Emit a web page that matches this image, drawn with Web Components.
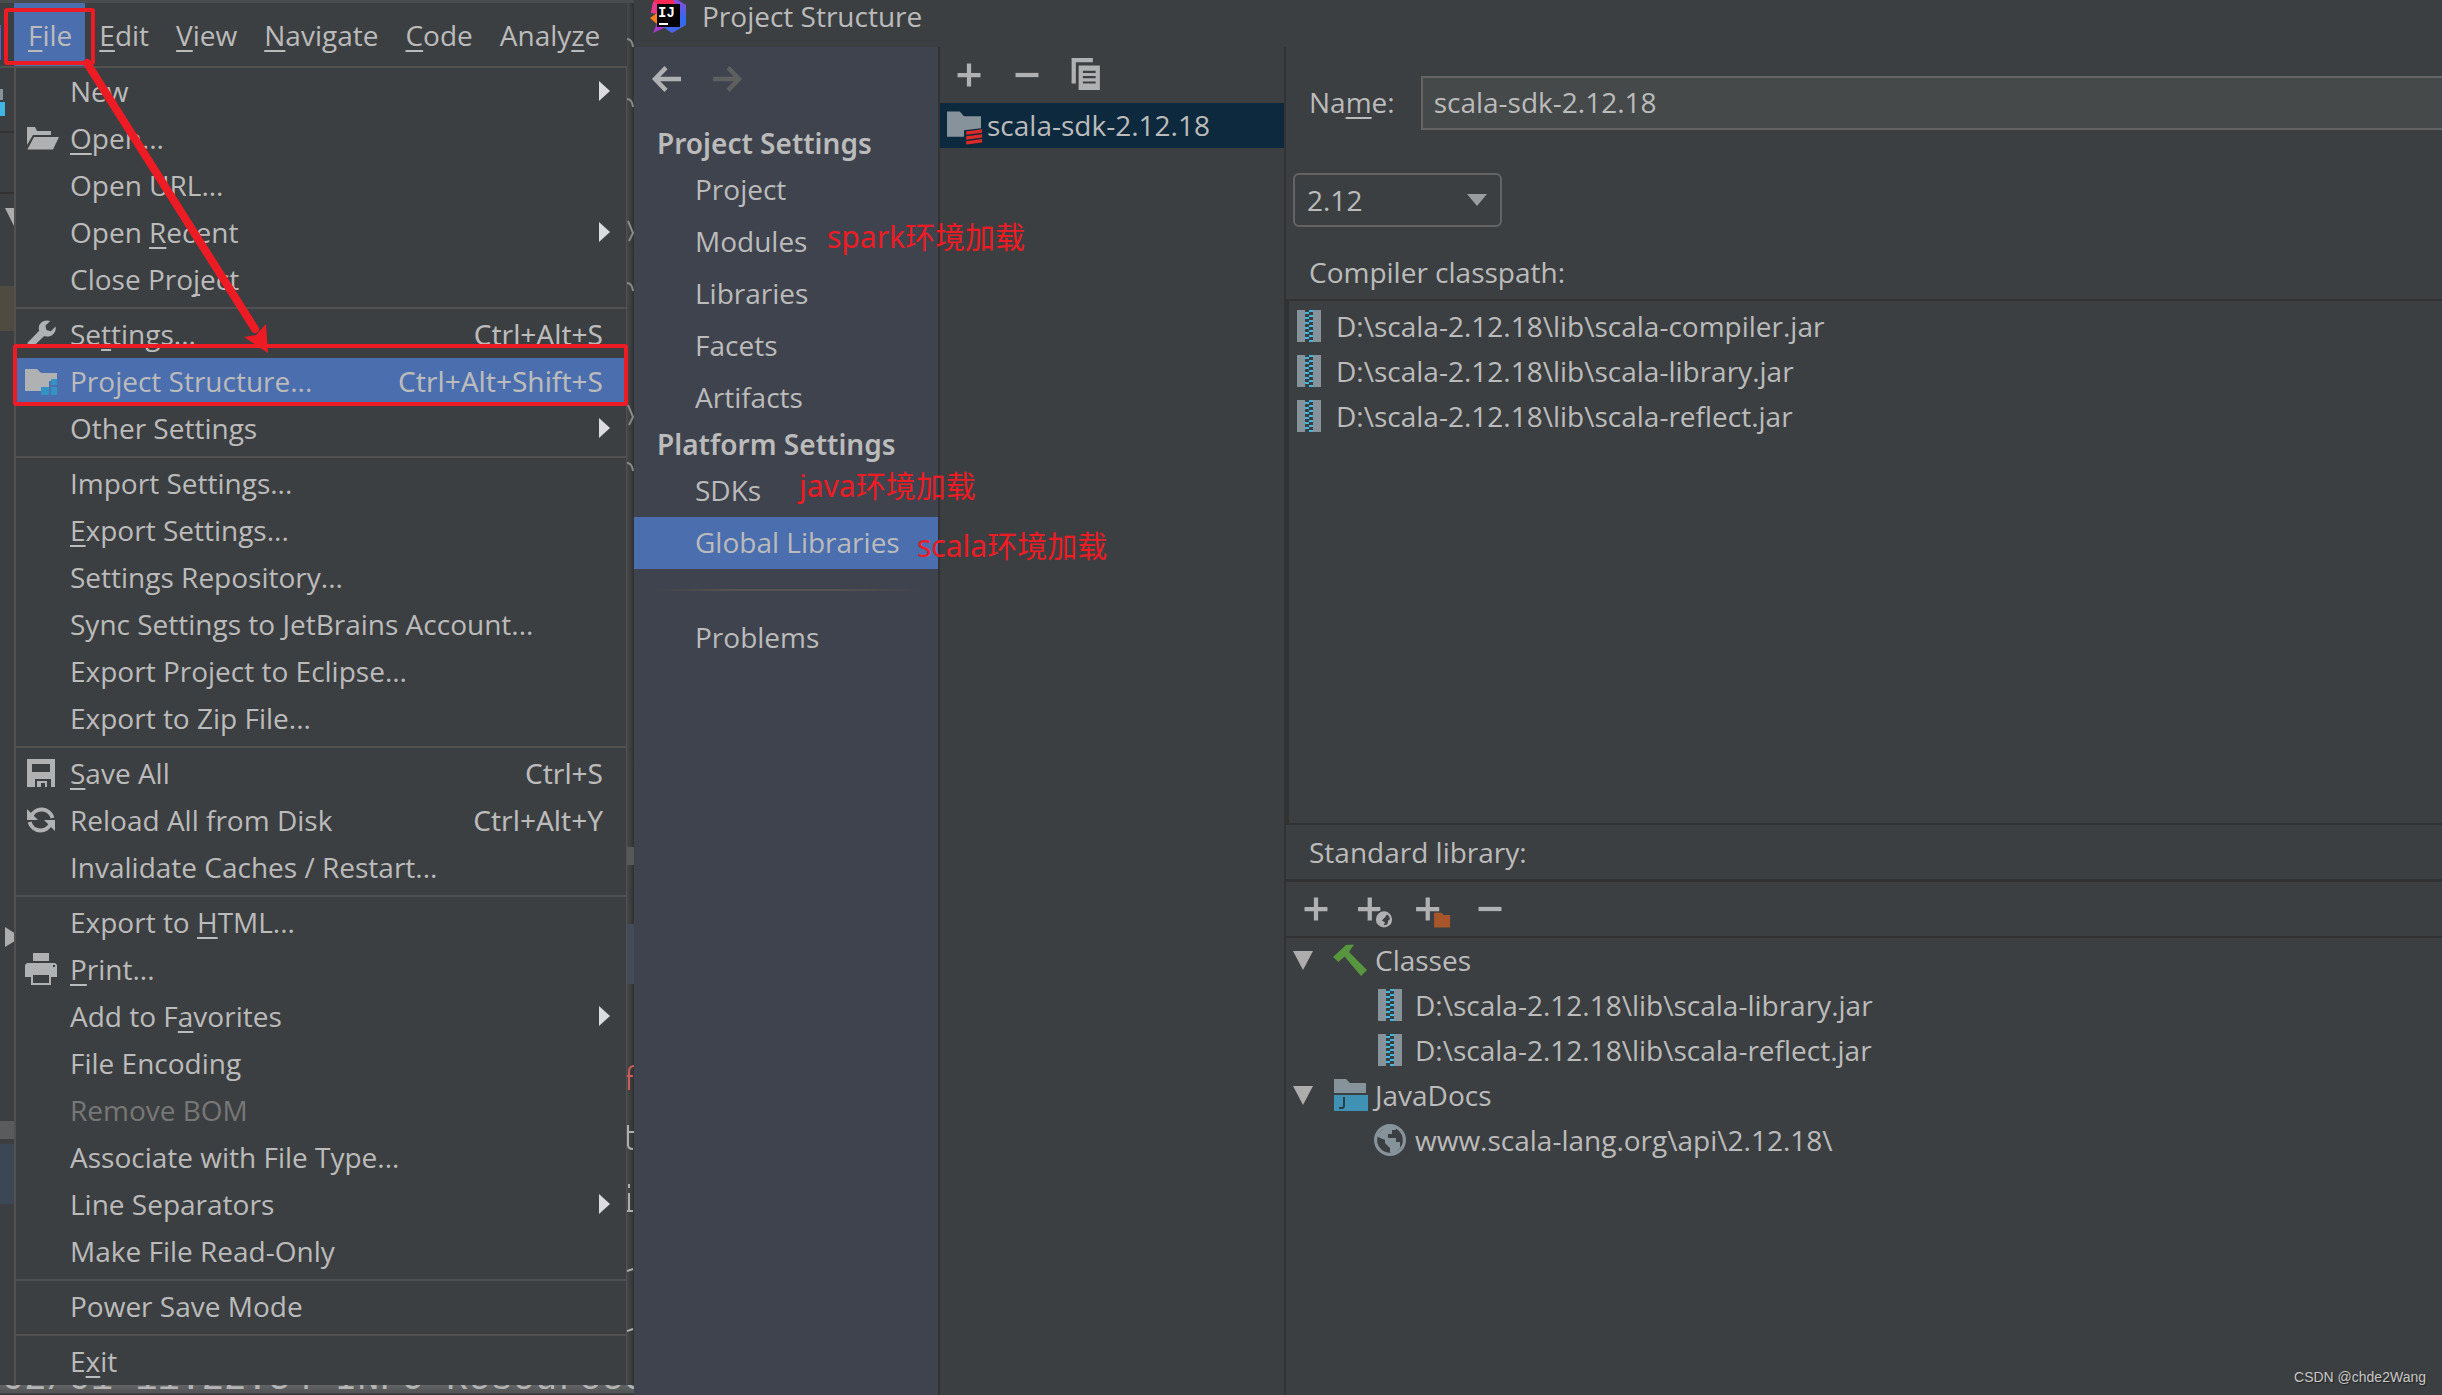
<!DOCTYPE html>
<html lang="en">
<head>
<meta charset="utf-8">
<title>Project Structure</title>
<style>
    html,
    body {
        margin: 0;
        height: 100%;
    }

    body {
        --panel: #3c3f41;
        --line: #323232;
        --menu-line: #515151;
        --text: #bbbbbb;
        --select: #4b6eaf;
        --mark: #ed1c24;
        background: var(--panel);
        color: var(--text);
        font: 28px/38px "Open Sans", "Noto Sans CJK SC", sans-serif;
        overflow: hidden;
    }

    u {
        text-decoration-thickness: 2px;
        text-underline-offset: 4px;
        text-decoration-skip-ink: none;
    }
</style>
</head>
<body>
<app-screen>
    <ide-window slot="ide">
        <menu-bar slot="bar">
            <button class="open"><u>F</u>ile</button>
            <button><u>E</u>dit</button>
            <button><u>V</u>iew</button>
            <button><u>N</u>avigate</button>
            <button><u>C</u>ode</button>
            <button>Analy<u>z</u>e</button>
        </menu-bar>
        <menu-entry submenu>New</menu-entry>
        <menu-entry icon="open"><u>O</u>pen...</menu-entry>
        <menu-entry>Open URL...</menu-entry>
        <menu-entry submenu>Open <u>R</u>ecent</menu-entry>
        <menu-entry>Close Pro<u>j</u>ect</menu-entry>
        <menu-line></menu-line>
        <menu-entry icon="wrench" shortcut="Ctrl+Alt+S">Se<u>t</u>tings...</menu-entry>
        <menu-entry icon="structure" shortcut="Ctrl+Alt+Shift+S" selected>Project Structure...</menu-entry>
        <menu-entry submenu>Other Settings</menu-entry>
        <menu-line></menu-line>
        <menu-entry>Import Settings...</menu-entry>
        <menu-entry><u>E</u>xport Settings...</menu-entry>
        <menu-entry>Settings Repository...</menu-entry>
        <menu-entry>Sync Settings to JetBrains Account...</menu-entry>
        <menu-entry>Export Project to Eclipse...</menu-entry>
        <menu-entry>Export to Zip File...</menu-entry>
        <menu-line></menu-line>
        <menu-entry icon="save" shortcut="Ctrl+S"><u>S</u>ave All</menu-entry>
        <menu-entry icon="reload" shortcut="Ctrl+Alt+Y">Reload All from Disk</menu-entry>
        <menu-entry>Invalidate Caches / Restart...</menu-entry>
        <menu-line></menu-line>
        <menu-entry>Export to <u>H</u>TML...</menu-entry>
        <menu-entry icon="print"><u>P</u>rint...</menu-entry>
        <menu-entry submenu>Add to F<u>a</u>vorites</menu-entry>
        <menu-entry>File Encoding</menu-entry>
        <menu-entry disabled>Remove BOM</menu-entry>
        <menu-entry>Associate with File Type...</menu-entry>
        <menu-entry submenu>Line Separators</menu-entry>
        <menu-entry>Make File Read-Only</menu-entry>
        <menu-line></menu-line>
        <menu-entry>Power Save Mode</menu-entry>
        <menu-line></menu-line>
        <menu-entry>E<u>x</u>it</menu-entry>
    </ide-window>

    <structure-dialog slot="dialog" caption="Project Structure">
        <settings-nav slot="nav">
            <nav-heading>Project Settings</nav-heading>
            <nav-entry>Project</nav-entry>
            <nav-entry>Modules</nav-entry>
            <nav-entry>Libraries</nav-entry>
            <nav-entry>Facets</nav-entry>
            <nav-entry>Artifacts</nav-entry>
            <nav-heading>Platform Settings</nav-heading>
            <nav-entry>SDKs</nav-entry>
            <nav-entry selected>Global Libraries</nav-entry>
            <nav-line></nav-line>
            <nav-entry>Problems</nav-entry>
        </settings-nav>
        <library-list slot="list">scala-sdk-2.12.18</library-list>
        <library-editor slot="editor"></library-editor>
    </structure-dialog>

    <mark-layer slot="marks"></mark-layer>
</app-screen>

<script>
const icons = {
    open: `<path fill="#afb1b3" d="M1 2.500h4l1 2h7v2H4L1 11.500z"/><path fill="#afb1b3" d="M4.500 7.500H17l-3 6.200H1.200z"/>`,
    wrench: `<path fill="#afb1b3" d="M15.300 4.300 12.900 6.600 10.700 6 10.200 3.900 12.600 1.500C11 .9 9.200 1.200 8 2.400 6.900 3.500 6.600 5 7.100 6.400L1 12.600l1.400.6.800 1.900L9.600 9C11 9.600 12.900 9.300 14.200 8c1-1 1.400-2.400 1.100-3.700z"/>`,
    structure: `<path fill="#afb1b3" d="M0 2h6l2 2h8v4h-4v4H8v1H0z"/><path fill="#3592c4" d="M13 7h3v3h-3zM8 11h4v4H8zM13 11h3v4h-3z"/>`,
    save: `<path fill="#afb1b3" fill-rule="evenodd" d="M1 1h14v14h-2v-4H5v4H1zM3.500 3.500v4h9v-4zM6 12h5v3h-1v-2H8v2H6z"/>`,
    reload: `<path fill="none" stroke="#afb1b3" stroke-width="2" d="M3 6.500A5.600 5.600 0 0 1 13.700 7M13 9.500A5.600 5.600 0 0 1 2.300 9"/><path fill="#afb1b3" d="M1 2.500V8h5.500zM15 13.500V8H9.500z"/>`,
    print: `<path fill="#afb1b3" fill-rule="evenodd" d="M4 0h8v4H4zM1 5h14l1 1v6h-3v4H3v-4H0V6zM14 6v1h1V6zM4 11v4h8v-4z"/>`,
    plus: `<path fill="#afb1b3" d="M7 2.600h2V7h4.400v2H9v4.400H7V9H2.600V7H7z"/>`,
    minus: `<path fill="#afb1b3" d="M2.600 7h10.800v2H2.600z"/>`,
    plusGlobe: `<path fill="#afb1b3" d="M5 2.600h2V7h4v2H7v4.400H5V9H.500V7H5z"/><circle cx="12.700" cy="12.900" r="4.600" fill="#3c3f41"/><circle cx="12.700" cy="12.900" r="3.300" fill="none" stroke="#afb1b3"/><path fill="#afb1b3" d="M9.700 10.900 12.700 9.400l1.500 1-1 1.500-1.500 1.500 1.500 1-1 2-3-3zM14.700 13.400l1.500-1-.5 3-1.500.5z"/>`,
    plusFolder: `<path fill="#afb1b3" d="M5 2.600h2V7h4.400v2H7v4.400H5V9H.500V7H5z"/><path fill="#a8552b" d="M9 9.800h3.500l1 1h3v5.900H9z"/>`,
    copy: `<path fill="#afb1b3" d="M1.700 0h10v2h-8v10h-2z"/><path fill="#afb1b3" fill-rule="evenodd" d="M5 3.500h10v11.500H5zM7 6v1h6V6zM7 8.500v1h6v-1zM7 11v1h6v-1z"/>`,
    back: `<path fill="none" stroke="#afb1b3" stroke-width="2.200" d="M15 8H2M7.500 2.300 2 8l5.500 5.700"/>`,
    forward: `<path fill="none" stroke="#5e6060" stroke-width="2.200" d="M1 8h13M8.500 2.300 14 8l-5.500 5.700"/>`,
    scalaFolder: `<path fill="#87939a" d="M0 1.700h6l2 2.200h8v5.600l-8 1v3H0z"/><path fill="#de2a26" d="m9 11 7.500-1v1.600l-7.500 1zM9 13.300l7.500-1v1.600l-7.500 1zM9 15.600l7.500-1v1.600l-7.500 1z"/>`,
    jar: `<path fill="#87939a" d="M2 0h4v16H2zM10 0h4v16h-4z"/><path fill="#40b6e0" d="M8 0h2v1H8zM6 1h2v1H6zM8 2.500h2v1H8zM6 3.500h2v1H6zM8 5h2v1H8zM6 6h2v1H6zM8 7.500h2v1H8zM6 8.500h2v1H6zM8 10h2v1H8zM6 11h2v1H6zM8 12.500h2v1H8zM6 13.500h2v1H6zM8 15h2v1H8z"/>`,
    hammer: `<path fill="#57963f" d="m-.5 6.500 6.500-6L10 .300 7.500 4 16.500 13l-3 3L5.300 6.300 2.200 9z"/>`,
    docs: `<path fill="#87939a" d="M0 0h6l2 2h8v5H0z"/><path fill="#3f92b3" d="M0 8h17v8H0z"/><path fill="none" stroke="#27404a" d="M5 9v4.200q0 1.300-1.300 1.300H2.500"/>`,
    globe: `<circle cx="8" cy="8" r="7.200" fill="none" stroke="#87939a" stroke-width="1.600"/><path fill="#87939a" d="M2 5 6 1h4.500l.5 2H9v2H7v2h4v2h2v3l-3.500 3.500L8 14v-2L5.500 9.500V8L2 6.500z"/>`
};

function icon(name, size = 32) {
    return `<svg width="${size}" height="${size}" viewBox="0 0 16 16" overflow="visible" aria-hidden="true">${icons[name]}</svg>`;
}

const base = `
    *,
    *::before,
    *::after {
        box-sizing: border-box;
    }

    :host {
        display: block;
        box-sizing: border-box;
    }

    button,
    input,
    select {
        font: inherit;
        color: inherit;
        background: none;
        border: 0;
        padding: 0;
        margin: 0;
    }

    svg {
        display: block;
        flex: none;
    }
`;

class BaseElement extends HTMLElement {
    constructor() {
        super();
        this.attachShadow({ mode: "open" });
    }

    connectedCallback() {
        this.shadowRoot.innerHTML = `<style>${base}</style>${this.render()}`;
    }
}

class AppScreen extends BaseElement {
    render() {
        return `
            <style>
                :host {
                    display: flex;
                    height: 100vh;
                    position: relative;
                }
                ::slotted([slot="ide"]) { flex: none; }
                ::slotted([slot="dialog"]) { flex: 1; min-width: 0; }
            </style>
            <slot name="ide"></slot>
            <slot name="dialog"></slot>
            <slot name="marks"></slot>
        `;
    }
}

// Main IDE frame: only thin slivers of it stay visible round the open menu.
class IdeWindow extends BaseElement {
    render() {
        return `
            <style>
                :host {
                    display: grid;
                    grid-template: 3px auto 1fr / 14px 613px 7px;
                    overflow: hidden;
                }
                .top {
                    grid-column: 1 / 4;
                    background: #494c4e;
                }
                .bar {
                    background: var(--panel);
                }
                .menu {
                    border-left: 2px solid var(--menu-line);
                    border-right: 1px solid var(--menu-line);
                }
                .left, .right {
                    overflow: hidden;
                    height: 0;
                    min-height: 100%;
                }
                .right {
                    background: linear-gradient(90deg, #454849, #303132);
                }
                .log {
                    grid-column: 1 / 4;
                    overflow: hidden;
                    display: flex;
                    align-items: flex-end;
                    background: linear-gradient(#626466, #505254 80%, #333536 90%);
                    color: #b4b4b4;
                    font: 37px/32px "Liberation Mono", monospace;
                    white-space: pre;
                    height: 10px;
                    padding-left: 2px;
                }
            </style>
            <div class="top"></div>
            <div class="left">
                <svg width="14" height="1382">
                    <path fill="#6b57c8" d="M0 22h1v35H0z"/>
                    <path fill="#515151" d="M0 63h14v2H0z"/>
                    <path fill="#87939a" d="M0 86h3v11H0z"/>
                    <path fill="#40b6e0" d="M0 99h5v14H0z"/>
                    <path fill="#323232" d="M0 128h14v2H0zM0 189h14v2H0z"/>
                    <path fill="#adadad" d="M5 205h20l-10 20zM5 924l16 10-16 10z"/>
                    <path fill="#4f4b41" d="M0 283h14v45H0z"/>
                    <path fill="#595b5d" d="M0 1118h14v18H0z"/>
                    <path fill="#3b4754" d="M0 1141h14v60H0z"/>
                </svg>
            </div>
            <div>
                <div class="bar"><slot name="bar"></slot></div>
                <div class="menu" role="menu"><slot></slot></div>
            </div>
            <div class="right">
                <svg width="7" height="1382" fill="none" stroke="#87898b" stroke-width="2">
                    <path d="M0 36q5 0 6 8M0 96q5 0 6 8M1 218l5 12-4 8M0 280q5 0 6 8M1 402l5 12-4 8M0 460q5 0 6 8"/>
                    <path fill="#56585a" stroke="none" d="M0 844h7v18H0z"/>
                    <path fill="#444c5a" stroke="none" d="M0 921h7v60H0z"/>
                    <path stroke="#cf5b56" d="M2 1087v-18q0-6 5-6M0 1073h6"/>
                    <path stroke="#adadad" d="M1 1122v20q0 4 5 4M0 1129h7M2 1190v18M0 1208h6M2 1181v4M0 1268l6-2M0 1328l6-2"/>
                </svg>
            </div>
            <div class="log">02/01 11:22:54 INFO Resourcec</div>
        `;
    }
}

class MenuBar extends BaseElement {
    render() {
        return `
            <style>
                :host {
                    display: flex;
                    height: 65px;
                    border-bottom: 2px solid var(--menu-line);
                }
                ::slotted(button) {
                    font: inherit;
                    color: inherit;
                    background: none;
                    border: 0;
                    padding: 0 13px 0 14px;
                }
                ::slotted(button.open) { background: var(--select); }
            </style>
            <slot></slot>
        `;
    }
}

class MenuEntry extends BaseElement {
    render() {
        const name = this.getAttribute("icon");
        const shortcut = this.getAttribute("shortcut");
        return `
            <style>
                button {
                    display: flex;
                    align-items: center;
                    width: 100%;
                    height: 47px;
                    padding: 0 23px 2px 9px;
                    text-align: left;
                }
                .icon {
                    flex: none;
                    width: 32px;
                    margin-right: 13px;
                }
                .label { flex: 1; }
                .shortcut { font-family: "Noto Sans", sans-serif; }
                .arrow { margin-right: -7px; }
                :host([selected]) { background: var(--select); }
                :host([disabled]) { color: #777777; }
            </style>
            <button role="menuitem" ${this.hasAttribute("disabled") ? "disabled" : ""}>
                <span class="icon">${name ? icon(name) : ""}</span>
                <span class="label"><slot></slot></span>
                ${shortcut ? `<span class="shortcut">${shortcut}</span>` : ""}
                ${this.hasAttribute("submenu") ? `<svg class="arrow" width="11" height="20"><path fill="#dcdcde" d="M0 0l11 10L0 20z"/></svg>` : ""}
            </button>
        `;
    }
}

class MenuLine extends BaseElement {
    render() {
        return `
            <style>
                :host {
                    height: 2px;
                    margin: 4px 0 2px;
                    background: var(--menu-line);
                }
            </style>
        `;
    }
}

class StructureDialog extends BaseElement {
    render() {
        return `
            <style>
                :host {
                    display: flex;
                    flex-direction: column;
                    background: var(--panel);
                }
                header {
                    display: flex;
                    align-items: flex-start;
                    gap: 16px;
                    height: 47px;
                    padding-left: 16px;
                    line-height: 33px;
                }
                .columns {
                    flex: 1;
                    min-height: 0;
                    display: grid;
                    grid-template-columns: 306px 346px 1fr;
                }
                text { font: bold 14px "Liberation Mono", monospace; }
            </style>
            <header>
                <svg width="36" height="33" viewBox="0 0 36 33">
                    <defs>
                        <linearGradient id="blue" x1="0" y1="0" x2="0" y2="1">
                            <stop offset="0" stop-color="#8a4bd8"/>
                            <stop offset=".6" stop-color="#2d6df0"/>
                            <stop offset="1" stop-color="#4d63e6"/>
                        </linearGradient>
                    </defs>
                    <path fill="url(#blue)" d="M22 0h6l8 5v20l-14 8-9-6V5z"/>
                    <path fill="#fe2857" d="M4 0h19l4 7H8L1 13z"/>
                    <path fill="#e83a8c" d="M3 2l-2 11 6 1V3z"/>
                    <path fill="#fc801d" d="M0 18l7-5v11z"/>
                    <path fill="#a43bc8" d="M7 23l-4 10 13-6z"/>
                    <path d="M7 4h23v23H7z"/>
                    <path fill="#fff" d="M9 23h9v2H9z"/>
                    <text x="8" y="17" fill="#fff">IJ</text>
                </svg>
                <span>${this.getAttribute("caption")}</span>
            </header>
            <div class="columns">
                <slot name="nav"></slot>
                <slot name="list"></slot>
                <slot name="editor"></slot>
            </div>
        `;
    }
}

class SettingsNav extends BaseElement {
    render() {
        return `
            <style>
                :host {
                    background: #3f434d;
                    border-right: 2px solid var(--line);
                }
                .history {
                    display: flex;
                    height: 64px;
                    margin-bottom: 12px;
                    padding-left: 3px;
                }
                .history button {
                    display: grid;
                    place-items: center;
                    width: 60px;
                }
            </style>
            <div class="history">
                <button aria-label="Back">${icon("back")}</button>
                <button aria-label="Forward" disabled>${icon("forward")}</button>
            </div>
            <nav><slot></slot></nav>
        `;
    }
}

class NavHeading extends BaseElement {
    render() {
        return `
            <style>
                :host {
                    padding-left: 23px;
                    font-family: "Noto Sans", sans-serif;
                    font-weight: 600;
                    line-height: 41px;
                }
            </style>
            <slot></slot>
        `;
    }
}

class NavEntry extends BaseElement {
    render() {
        return `
            <style>
                button {
                    width: 100%;
                    height: 52px;
                    padding: 0 0 2px 61px;
                    text-align: left;
                }
                :host([selected]) { background: var(--select); }
            </style>
            <button><slot></slot></button>
        `;
    }
}

class NavLine extends BaseElement {
    render() {
        return `
            <style>
                :host {
                    height: 2px;
                    margin: 20px 18px 21px;
                    background: linear-gradient(90deg, transparent, #55534f 30% 70%, transparent);
                }
            </style>
        `;
    }
}

class ToolBar extends BaseElement {
    render() {
        const buttons = this.getAttribute("actions").split(",").map((action) => {
            const [name, label] = action.split(":");
            return `<button aria-label="${label}">${icon(name, 34)}</button>`;
        });
        return `
            <style>
                :host {
                    display: flex;
                    height: 56px;
                }
                button {
                    display: grid;
                    place-items: center;
                    width: 58px;
                }
            </style>
            ${buttons.join("")}
        `;
    }
}

class LibraryList extends BaseElement {
    render() {
        return `
            <style>
                :host { border-right: 2px solid var(--line); }
                .row {
                    display: flex;
                    align-items: center;
                    gap: 6px;
                    width: 100%;
                    height: 45px;
                    padding: 0 0 2px 7px;
                    background: #0d293e;
                }
            </style>
            <tool-bar actions="plus:Add,minus:Remove,copy:Copy"></tool-bar>
            <button class="row">${icon("scalaFolder", 34)}<slot></slot></button>
        `;
    }
}

class TreeRow extends BaseElement {
    render() {
        return `
            <style>
                :host {
                    display: flex;
                    align-items: center;
                    gap: 8px;
                    height: 45px;
                    padding-left: 7px;
                }
                :host([child]) { padding-left: 87px; }
                :host([flat]) { padding-left: 3px; gap: 10px; }
                .icon {
                    display: grid;
                    place-items: center;
                    width: 34px;
                }
                .toggle { margin-right: 12px; }
            </style>
            ${this.hasAttribute("expanded") ? `<button class="toggle" aria-label="Collapse"><svg width="20" height="19"><path fill="#adadad" d="M0 0h20L10 19z"/></svg></button>` : ""}
            <span class="icon">${icon(this.getAttribute("icon"))}</span>
            <slot></slot>
        `;
    }
}

class LibraryEditor extends BaseElement {
    render() {
        return `
            <style>
                :host {
                    display: flex;
                    flex-direction: column;
                    min-width: 0;
                }
                .name {
                    display: flex;
                    align-items: center;
                    gap: 26px;
                    padding: 29px 0 43px 23px;
                }
                .name label { padding-bottom: 2px; }
                u {
                    text-decoration-thickness: 2px;
                    text-underline-offset: 4px;
                }
                input {
                    flex: 1;
                    min-width: 0;
                    height: 54px;
                    padding: 0 11px 2px;
                    background: #45494a;
                    border: 2px solid #646464;
                    border-right: 0;
                }
                .version {
                    display: flex;
                    align-items: center;
                    width: 209px;
                    height: 54px;
                    margin-left: 7px;
                    border: 2px solid #646464;
                    border-radius: 6px;
                }
                select {
                    appearance: none;
                    flex: 1;
                    height: 50px;
                    padding-left: 12px;
                }
                .version svg {
                    margin: 0 13px 0 -40px;
                    pointer-events: none;
                }
                .label { padding: 26px 23px 8px; }
                .classpath {
                    flex: 519 1 0;
                    padding-top: 2px;
                    border: solid var(--line);
                    border-width: 2px 0 2px 3px;
                }
                .library {
                    padding: 8px 23px;
                    border-bottom: 3px solid var(--line);
                }
                tool-bar {
                    padding-left: 1px;
                    border-bottom: 2px solid var(--line);
                }
                .tree { flex: 457 1 0; }
            </style>
            <div class="name">
                <label for="name">Na<u>m</u>e:</label>
                <input id="name" value="scala-sdk-2.12.18">
            </div>
            <div class="version">
                <select aria-label="Scala version"><option>2.12</option></select>
                <svg width="20" height="12"><path fill="#9a9da0" d="M0 0h20L10 12z"/></svg>
            </div>
            <div class="label">Compiler classpath:</div>
            <div class="classpath">
                <tree-row flat icon="jar">D:\\scala-2.12.18\\lib\\scala-compiler.jar</tree-row>
                <tree-row flat icon="jar">D:\\scala-2.12.18\\lib\\scala-library.jar</tree-row>
                <tree-row flat icon="jar">D:\\scala-2.12.18\\lib\\scala-reflect.jar</tree-row>
            </div>
            <div class="library">Standard library:</div>
            <tool-bar actions="plus:Add,plusGlobe:Add URL,plusFolder:Add folder,minus:Remove"></tool-bar>
            <div class="tree">
                <tree-row expanded icon="hammer">Classes</tree-row>
                <tree-row child icon="jar">D:\\scala-2.12.18\\lib\\scala-library.jar</tree-row>
                <tree-row child icon="jar">D:\\scala-2.12.18\\lib\\scala-reflect.jar</tree-row>
                <tree-row expanded icon="docs">JavaDocs</tree-row>
                <tree-row child icon="globe">www.scala-lang.org\\api\\2.12.18\\</tree-row>
            </div>
        `;
    }
}

// Red boxes, arrow and notes drawn over both windows.
class MarkLayer extends BaseElement {
    render() {
        return `
            <style>
                :host {
                    position: absolute;
                    inset: 0;
                    pointer-events: none;
                    color: var(--mark);
                    font: 30px/40px "Noto Sans", "Noto Sans CJK SC", sans-serif;
                }
                svg, span { position: absolute; }
                svg { left: 0; top: 0; }
                .spark { left: 827px; top: 217px; }
                .java { left: 799px; top: 466px; }
                .scala { left: 917px; top: 526px; }
                .credit {
                    right: 16px;
                    bottom: 8px;
                    color: #c8c8c8;
                    font: 14px/20px "Liberation Sans", sans-serif;
                    text-shadow: 1px 1px 1px #222222;
                }
            </style>
            <svg width="634" height="420" fill="none" stroke="#ed1c24" stroke-width="4">
                <rect x="6" y="10" width="87" height="53" rx="1"/>
                <rect x="15" y="346" width="611" height="58" rx="1"/>
                <path stroke-width="8" stroke-linecap="round" d="M87 63l168 266"/>
                <path fill="#ed1c24" stroke="none" d="M268 353l-24-16 12-2 10-11z"/>
            </svg>
            <span class="spark">spark环境加载</span>
            <span class="java">java环境加载</span>
            <span class="scala">scala环境加载</span>
            <span class="credit">CSDN @chde2Wang</span>
        `;
    }
}

customElements.define("app-screen", AppScreen);
customElements.define("ide-window", IdeWindow);
customElements.define("menu-bar", MenuBar);
customElements.define("menu-entry", MenuEntry);
customElements.define("menu-line", MenuLine);
customElements.define("structure-dialog", StructureDialog);
customElements.define("settings-nav", SettingsNav);
customElements.define("nav-heading", NavHeading);
customElements.define("nav-entry", NavEntry);
customElements.define("nav-line", NavLine);
customElements.define("tool-bar", ToolBar);
customElements.define("library-list", LibraryList);
customElements.define("tree-row", TreeRow);
customElements.define("library-editor", LibraryEditor);
customElements.define("mark-layer", MarkLayer);
</script>
</body>
</html>
